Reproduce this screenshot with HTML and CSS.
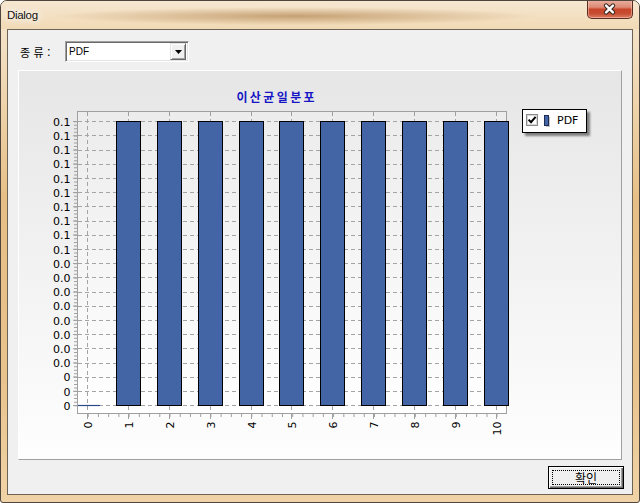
FILE: index.html
```html
<!DOCTYPE html>
<html lang="ko">
<head>
<meta charset="utf-8">
<title>Dialog</title>
<link rel="stylesheet" href="styles.css">
</head>
<body>
<div class="window">
  <div class="titlebar">
    <span class="title">Dialog</span>
    <div class="close">
      <svg width="46" height="19" viewBox="0 0 46 19">
        <path d="M19.5 6.5l7 7m0-7l-7 7" stroke="#3b2a26" stroke-width="4.6" stroke-linecap="round"/>
        <path d="M19.5 6.5l7 7m0-7l-7 7" stroke="#ffffff" stroke-width="2.4" stroke-linecap="round"/>
      </svg>
    </div>
  </div>
  <div class="client">
    <div class="row">
      <span class="label">종 류 :</span>
      <div class="combo">
        <span class="combo-text">PDF</span>
        <span class="combo-btn">
          <svg width="7" height="4" viewBox="0 0 7 4"><path d="M0 0h7L3.5 4z" fill="#000"/></svg>
        </span>
      </div>
    </div>
    <div class="panel">
      <svg class="chart" width="602" height="388" viewBox="19 71 602 388">
        <defs>
          <linearGradient id="plotbg" x1="0" y1="0" x2="0" y2="1">
            <stop offset="0" stop-color="#ececec"/>
            <stop offset="1" stop-color="#ffffff"/>
          </linearGradient>
          <filter id="blur" x="-20%" y="-20%" width="140%" height="140%">
            <feGaussianBlur stdDeviation="1"/>
          </filter>
        </defs>
        <text class="ctitle" x="276.7" y="101.5" text-anchor="middle">이산균일분포</text>

        <rect x="77.5" y="111.5" width="429" height="302" fill="url(#plotbg)" stroke="#a0a0a0"/>

        <g class="grid">
          <path d="M78 121.5H506M78 135.5H506M78 150.5H506M78 164.5H506M78 178.5H506M78 192.5H506M78 206.5H506M78 221.5H506M78 235.5H506M78 249.5H506M78 263.5H506M78 277.5H506M78 292.5H506M78 306.5H506M78 320.5H506M78 334.5H506M78 348.5H506M78 363.5H506M78 377.5H506M78 391.5H506M78 405.5H506"/>
          <path d="M87.5 112V413M128.5 112V413M169.5 112V413M210.5 112V413M251.5 112V413M291.5 112V413M332.5 112V413M373.5 112V413M414.5 112V413M455.5 112V413M496.5 112V413"/>
        </g>

        <g class="ticks">
          <line x1="75.5" y1="121.2" x2="75.5" y2="407" stroke-width="3" stroke-dasharray="1 2.55"/>
          <line x1="75" y1="121" x2="75" y2="407" stroke-width="4" stroke-dasharray="1 13.2"/>
          <line x1="87.7" y1="415.5" x2="497.5" y2="415.5" stroke-width="3" stroke-dasharray="1 9.225"/>
          <path d="M87.5 414V419M128.5 414V419M169.5 414V419M210.5 414V419M251.5 414V419M291.5 414V419M332.5 414V419M373.5 414V419M414.5 414V419M455.5 414V419M496.5 414V419"/>
          <path d="M87.5 112V116M128.5 112V116M169.5 112V116M210.5 112V116M251.5 112V116M291.5 112V116M332.5 112V116M373.5 112V116M414.5 112V116M455.5 112V116M496.5 112V116"/>
        </g>

        <g class="bars">
          <rect x="116.5" y="121.5" width="24" height="284"/>
          <rect x="157.5" y="121.5" width="24" height="284"/>
          <rect x="198.5" y="121.5" width="24" height="284"/>
          <rect x="239.5" y="121.5" width="24" height="284"/>
          <rect x="279.5" y="121.5" width="24" height="284"/>
          <rect x="320.5" y="121.5" width="24" height="284"/>
          <rect x="361.5" y="121.5" width="24" height="284"/>
          <rect x="402.5" y="121.5" width="24" height="284"/>
          <rect x="443.5" y="121.5" width="24" height="284"/>
          <rect x="484.5" y="121.5" width="24" height="284"/>
        </g>
        <line x1="78" y1="405.5" x2="100" y2="405.5" stroke="#2c4a86" stroke-width="1.2"/>

        <g class="ylabels" text-anchor="end">
          <text x="70.5" y="125.7">0.1</text>
          <text x="70.5" y="139.9">0.1</text>
          <text x="70.5" y="154.1">0.1</text>
          <text x="70.5" y="168.3">0.1</text>
          <text x="70.5" y="182.5">0.1</text>
          <text x="70.5" y="196.7">0.1</text>
          <text x="70.5" y="210.9">0.1</text>
          <text x="70.5" y="225.1">0.1</text>
          <text x="70.5" y="239.3">0.1</text>
          <text x="70.5" y="253.5">0.1</text>
          <text x="70.5" y="267.7">0.0</text>
          <text x="70.5" y="281.9">0.0</text>
          <text x="70.5" y="296.1">0.0</text>
          <text x="70.5" y="310.3">0.0</text>
          <text x="70.5" y="324.5">0.0</text>
          <text x="70.5" y="338.7">0.0</text>
          <text x="70.5" y="352.9">0.0</text>
          <text x="70.5" y="367.1">0.0</text>
          <text x="70.5" y="381.3">0</text>
          <text x="70.5" y="395.5">0</text>
          <text x="70.5" y="409.7">0</text>
        </g>

        <g class="xlabels" text-anchor="end">
          <text transform="translate(91.7 421.5) rotate(-90)">0</text>
          <text transform="translate(132.5 421.5) rotate(-90)">1</text>
          <text transform="translate(173.5 421.5) rotate(-90)">2</text>
          <text transform="translate(214.5 421.5) rotate(-90)">3</text>
          <text transform="translate(255.5 421.5) rotate(-90)">4</text>
          <text transform="translate(295.7 421.5) rotate(-90)">5</text>
          <text transform="translate(336.5 421.5) rotate(-90)">6</text>
          <text transform="translate(377.5 421.5) rotate(-90)">7</text>
          <text transform="translate(418.7 421.5) rotate(-90)">8</text>
          <text transform="translate(459.5 421.5) rotate(-90)">9</text>
          <text transform="translate(500.7 421.5) rotate(-90)">10</text>
        </g>

        <g class="legend">
          <rect x="525" y="112" width="65" height="24" fill="#5a5a5a" opacity="0.75" filter="url(#blur)"/>
          <rect x="522.5" y="109.5" width="64" height="23" fill="#ffffff" stroke="#000000"/>
          <rect x="526.5" y="114.5" width="11" height="11" fill="#ffffff" stroke="#8a8a8a"/>
          <rect x="527.5" y="115.5" width="9" height="9" fill="none" stroke="#d8d8d8"/>
          <path d="M528.6 119.6l2.4 2.6 4.6-5.4" fill="none" stroke="#000" stroke-width="2"/>
          <rect x="546" y="117" width="4" height="10" fill="#9a9a9a" opacity="0.6"/>
          <rect x="544.5" y="115.5" width="4" height="10" fill="#4364a5" stroke="#1c2c52"/>
          <text x="557" y="124">PDF</text>
        </g>
      </svg>
    </div>
    <div class="footer">
      <button class="ok" type="button"><span class="focus">확인</span></button>
    </div>
  </div>
</div>
</body>
</html>
```
FILE: styles.css
```css
html, body {
  margin: 0;
  padding: 0;
  background: #ffffff;
}

.window {
  position: relative;
  width: 640px;
  height: 503px;
  box-sizing: border-box;
  border: 1px solid #4e463c;
  border-radius: 7px 7px 3px 3px;
  background: linear-gradient(to bottom, #f5e6d0 0, #f1dcbc 60px, #e7bf86 200px, #e9c38d 380px, #f0d3a6 100%);
  display: flex;
  flex-direction: column;
  overflow: hidden;
}

.titlebar {
  position: relative;
  height: 28px;
  flex: none;
  display: flex;
  align-items: center;
  padding-left: 6px;
  background:
    radial-gradient(ellipse 38% 32% at 46% 54%, rgba(160, 110, 52, 0.55), rgba(160, 110, 52, 0) 100%),
    linear-gradient(to bottom, #f6e7d2, #f1d9b4);
}

.title {
  font-family: "Liberation Sans", Arial, sans-serif;
  font-size: 11.5px;
  letter-spacing: -0.3px;
  color: #111;
  text-shadow: 0 0 6px #fff, 0 0 10px #fff, 0 0 14px #fff;
}

.close {
  position: absolute;
  top: -1px;
  right: 6px;
  width: 46px;
  height: 19px;
  box-sizing: border-box;
  border: 1px solid #5b2b22;
  border-top: none;
  border-radius: 0 0 5px 5px;
  background: linear-gradient(to bottom, #eab2a3 0%, #dc8a74 40%, #c9452a 52%, #c64c32 75%, #dd7d62 100%);
  box-shadow: inset 0 0 0 1px rgba(255, 220, 210, 0.45);
  display: flex;
}

.close svg {
  display: block;
  margin-left: -1px;
  margin-top: -1px;
}

.client {
  flex: 1;
  margin: 0 6px 7px;
  border: 1px solid #6c6255;
  background: #f0f0f0;
  display: flex;
  flex-direction: column;
}

.row {
  display: flex;
  align-items: center;
  height: 21px;
  margin-top: 11px;
  padding-left: 12px;
}

.label {
  width: 45px;
  font-family: "Noto Sans CJK KR", sans-serif;
  font-size: 11px;
  letter-spacing: -0.3px;
  word-spacing: 1px;
  color: #000;
}

.combo {
  width: 124px;
  height: 21px;
  box-sizing: border-box;
  border: 1px solid;
  border-color: #a0a0a0 #ffffff #ffffff #a0a0a0;
  box-shadow: inset 1px 1px 0 #696969, inset -1px -1px 0 #e3e3e3;
  background: #ffffff;
  display: flex;
  align-items: center;
  padding: 1px 2px 1px 2px;
}

.combo-text {
  flex: 1;
  font-family: "Liberation Sans", Arial, sans-serif;
  font-size: 10px;
  color: #000;
  padding-left: 1px;
}

.combo-btn {
  width: 16px;
  height: 17px;
  box-sizing: border-box;
  background: #f0f0f0;
  border: 1px solid;
  border-color: #e3e3e3 #696969 #696969 #e3e3e3;
  box-shadow: inset 1px 1px 0 #ffffff, inset -1px -1px 0 #a0a0a0;
  display: flex;
  align-items: center;
  justify-content: center;
}

.combo-btn svg {
  display: block;
  margin-top: 1px;
}

.panel {
  width: 604px;
  height: 390px;
  box-sizing: border-box;
  margin: 8px 0 0 10px;
  border: 1px solid;
  border-color: #ffffff #a0a0a0 #a0a0a0 #ffffff;
  background: linear-gradient(to bottom, #e6e6e6, #fefefe);
}

.chart {
  display: block;
}

.ctitle {
  font-family: "Noto Sans CJK KR", sans-serif;
  font-size: 12px;
  font-weight: bold;
  letter-spacing: 2.4px;
  fill: #1616c4;
}

.grid path {
  fill: none;
  stroke: #a4a4a4;
  stroke-width: 1;
  stroke-dasharray: 4 3;
}

.ticks line,
.ticks path {
  fill: none;
  stroke: #a0a0a0;
}

.bars rect {
  fill: #4364a5;
  stroke: #000000;
  stroke-width: 1;
}

.ylabels text,
.xlabels text,
.legend text {
  font-family: "DejaVu Sans", Verdana, sans-serif;
  font-size: 11px;
  fill: #000;
}

.footer {
  display: flex;
  justify-content: flex-end;
  padding-right: 8px;
  margin-top: 6px;
}

.ok {
  width: 76px;
  height: 23px;
  box-sizing: border-box;
  margin: 0;
  padding: 3px;
  border: 1px solid #000000;
  background: #f0f0f0;
  box-shadow: inset 1px 1px 0 #ffffff, inset -1px -1px 0 #696969, inset -2px -2px 0 #a0a0a0;
  display: flex;
}

.focus {
  flex: 1;
  border: 1px dotted #000;
  display: flex;
  align-items: center;
  justify-content: center;
  font-family: "Noto Sans CJK KR", sans-serif;
  font-size: 12px;
  line-height: 1;
  color: #000;
}
```
